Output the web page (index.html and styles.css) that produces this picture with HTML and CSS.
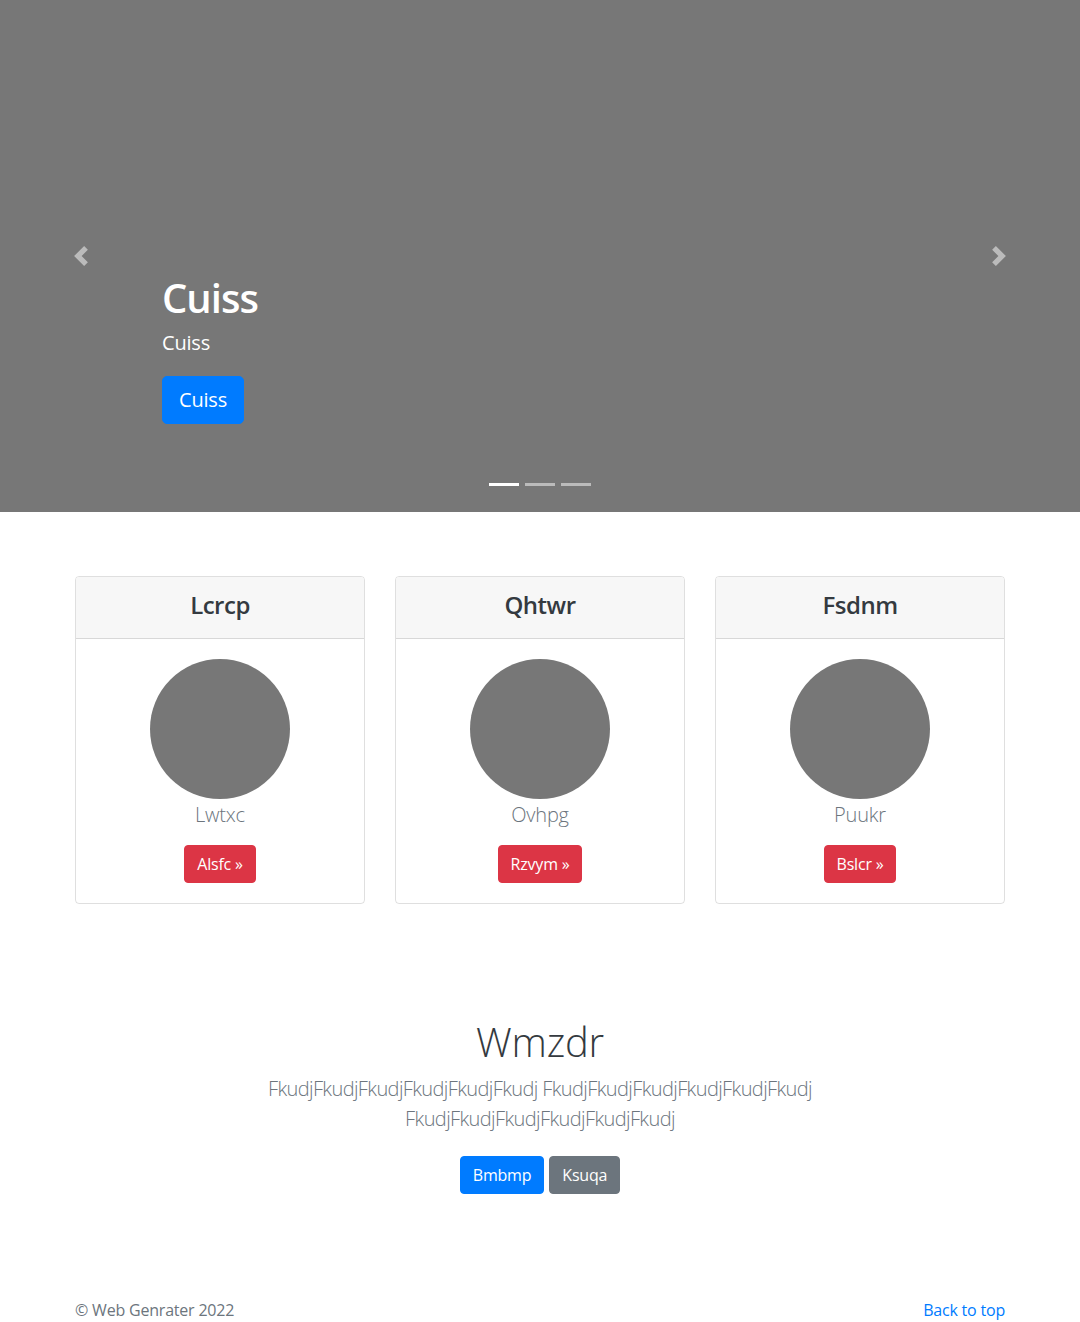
FILE: index.html
```html
<!DOCTYPE html>
<html lang="en">
<head>
<meta charset="utf-8">
<title>Web Genrater</title>
<link rel="stylesheet" href="styles.css">
</head>
<body>
<div class="carousel">
  <div class="slide">
    <div class="caption">
      <h1 class="caption-title">Cuiss</h1>
      <p class="caption-text">Cuiss</p>
      <p class="caption-action"><a class="btn btn-lg btn-primary" href="#">Cuiss</a></p>
    </div>
  </div>
  <ol class="indicators">
    <li class="active"></li>
    <li></li>
    <li></li>
  </ol>
  <a class="control control-prev" href="#">
    <svg class="control-icon" viewBox="0 0 8 8" width="20" height="20"><path fill="#fff" d="M5.25 0l-4 4 4 4 1.5-1.5L4.25 4l2.5-2.5L5.25 0z"/></svg>
  </a>
  <a class="control control-next" href="#">
    <svg class="control-icon" viewBox="0 0 8 8" width="20" height="20"><path fill="#fff" d="M2.75 0l-1.5 1.5L3.75 4l-2.5 2.5L2.75 8l4-4-4-4z"/></svg>
  </a>
</div>

<div class="container cards">
  <div class="card">
    <div class="card-header"><h4 class="card-title">Lcrcp</h4></div>
    <div class="card-body">
      <div class="avatar"></div>
      <p class="card-name">Lwtxc</p>
      <a class="btn btn-danger" href="#">Alsfc &raquo;</a>
    </div>
  </div>
  <div class="card">
    <div class="card-header"><h4 class="card-title">Qhtwr</h4></div>
    <div class="card-body">
      <div class="avatar"></div>
      <p class="card-name">Ovhpg</p>
      <a class="btn btn-danger" href="#">Rzvym &raquo;</a>
    </div>
  </div>
  <div class="card">
    <div class="card-header"><h4 class="card-title">Fsdnm</h4></div>
    <div class="card-body">
      <div class="avatar"></div>
      <p class="card-name">Puukr</p>
      <a class="btn btn-danger" href="#">Bslcr &raquo;</a>
    </div>
  </div>
</div>

<section class="intro">
  <h1 class="intro-title">Wmzdr</h1>
  <p class="intro-lead">FkudjFkudjFkudjFkudjFkudjFkudj FkudjFkudjFkudjFkudjFkudjFkudj FkudjFkudjFkudjFkudjFkudjFkudj</p>
  <p class="intro-actions">
    <a class="btn btn-primary" href="#">Bmbmp</a>
    <a class="btn btn-secondary" href="#">Ksuqa</a>
  </p>
</section>

<footer class="container footer">
  <p class="footer-copy">&copy; Web Genrater 2022</p>
  <p class="footer-top"><a href="#">Back to top</a></p>
</footer>
</body>
</html>
```
FILE: styles.css
```css
* { box-sizing: border-box; }
html, body { margin: 0; padding: 0; }
body {
  font-family: "Open Sans", "Noto Sans", "Liberation Sans", sans-serif;
  font-size: 16px;
  line-height: 1.5;
  color: #212529;
  background: #fff;
  letter-spacing: -0.2px;
}
a { text-decoration: none; }
p { margin: 0; }
h1, h4 { margin: 0; }

.container {
  width: 930px;
  margin: 0 auto;
}

/* Carousel */
.carousel {
  position: relative;
  height: 512px;
  background: #777;
}
.slide { height: 100%; }
.caption {
  position: absolute;
  left: 162px;
  right: 162px;
  bottom: 52px;
  padding: 20px 0;
  color: #fff;
}
.caption-title {
  font-size: 40px;
  line-height: 48px;
  font-weight: 600;
  letter-spacing: -1px;
  margin-bottom: 8px;
}
.caption-text {
  font-size: 20px;
  line-height: 30px;
  margin: -2px 0 18px;
}
.caption-action { margin-bottom: 16px; }

.indicators {
  position: absolute;
  left: 0;
  right: 0;
  top: 483px;
  margin: 0;
  padding: 0;
  list-style: none;
  display: flex;
  justify-content: center;
  gap: 6px;
}
.indicators li {
  width: 30px;
  height: 3px;
  background: #fff;
  opacity: .5;
}
.indicators li.active { opacity: 1; }

.control {
  position: absolute;
  top: 0;
  bottom: 0;
  width: 162px;
  display: flex;
  align-items: center;
  justify-content: center;
  opacity: .5;
}
.control-prev { left: 0; }
.control-next { right: 0; }
.control-icon { display: block; }

/* Buttons */
.btn {
  display: inline-block;
  font-size: 16px;
  line-height: 24px;
  padding: 6px 12px;
  border-radius: 4px;
  color: #fff;
  border: 1px solid transparent;
}
.btn-lg {
  font-size: 20px;
  line-height: 30px;
  padding: 8px 16px;
  border-radius: 5px;
}
.btn-primary { background: #007bff; border-color: #007bff; }
.btn-danger { background: #dc3545; border-color: #dc3545; }
.btn-secondary { background: #6c757d; border-color: #6c757d; }

/* Cards */
.cards {
  display: grid;
  grid-template-columns: repeat(3, 1fr);
  gap: 30px;
  margin-top: 64px;
}
.card {
  border: 1px solid rgba(0,0,0,.125);
  border-radius: 4px;
  text-align: center;
  overflow: hidden;
}
.card-header {
  background: #f7f7f7;
  border-bottom: 1px solid rgba(0,0,0,.125);
  padding: 10px 20px 15px;
}
.card-title {
  font-size: 24px;
  line-height: 36px;
  font-weight: 600;
  color: #343a40;
  letter-spacing: -0.5px;
}
.card-body {
  padding: 20px;
  display: flex;
  flex-direction: column;
  align-items: center;
}
.avatar {
  width: 140px;
  height: 140px;
  border-radius: 50%;
  background: #777;
}
.card-name {
  font-size: 20px;
  line-height: 30px;
  font-weight: 300;
  color: #6c757d;
  margin: 1px 0 15px;
}

/* Intro */
.intro {
  text-align: center;
  padding-top: 114px;
}
.intro-title {
  font-size: 40px;
  line-height: 48px;
  font-weight: 300;
  color: #343a40;
  margin-bottom: 8px;
}
.intro-lead {
  font-size: 20px;
  line-height: 30px;
  font-weight: 300;
  color: #6c757d;
  letter-spacing: -0.6px;
  max-width: 640px;
  margin: 0 auto 14px;
}
.intro-actions {
  display: flex;
  justify-content: center;
  gap: 5px;
  padding-top: 8px;
}

/* Footer */
.footer {
  display: flex;
  justify-content: space-between;
  margin-top: 104px;
  color: #6c757d;
}
.footer-top a { color: #007bff; }
```
